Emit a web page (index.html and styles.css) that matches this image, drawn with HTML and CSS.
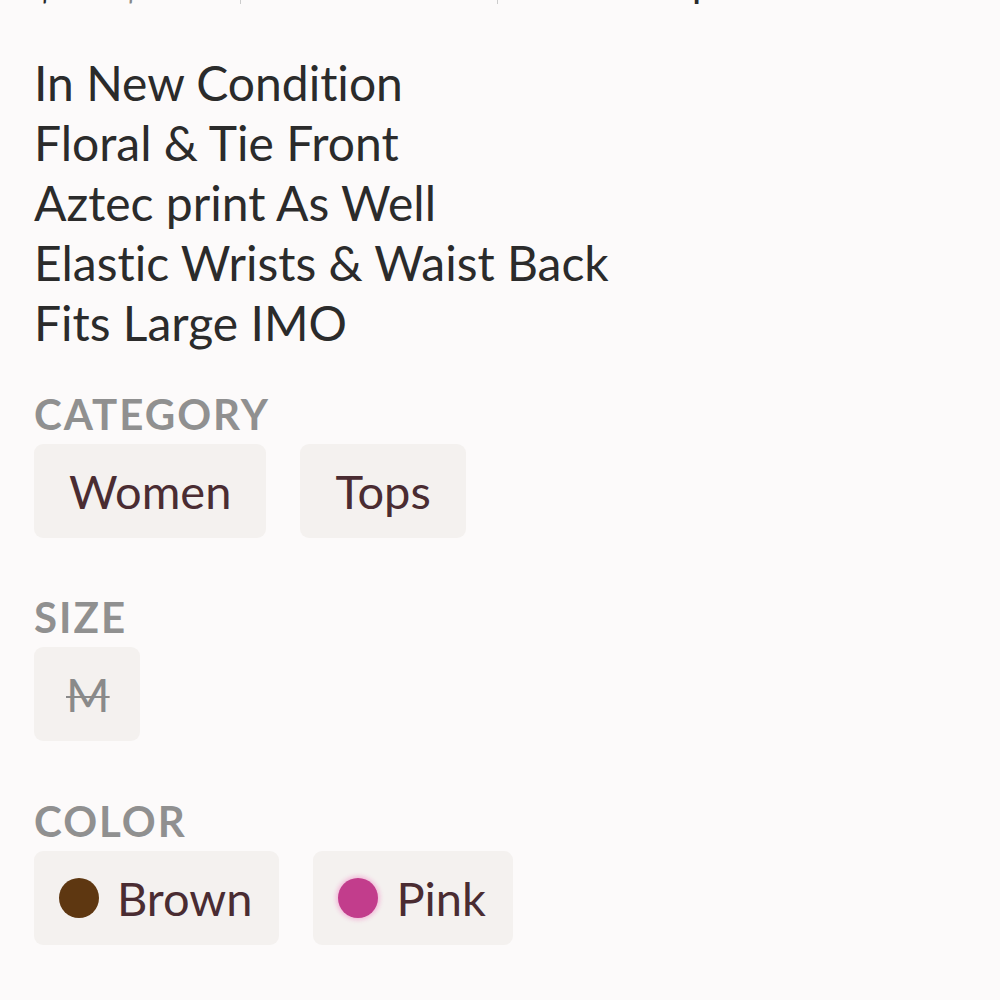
FILE: index.html
```html
<!DOCTYPE html>
<html>
<head>
<meta charset="utf-8">
<link rel="stylesheet" href="styles.css">
</head>
<body>
<div class="page">
  <div class="meta">
    <span class="price">$25</span><span class="was">$58</span><span class="sep"></span><span class="meta-item">Size: M</span><span class="sep"></span><span class="meta-item">Free People</span>
  </div>
  <div class="desc">
    <div>In New Condition</div>
    <div>Floral &amp; Tie Front</div>
    <div>Aztec print As Well</div>
    <div>Elastic Wrists &amp; Waist Back</div>
    <div>Fits Large IMO</div>
  </div>
  <section class="group">
    <h3 class="label">CATEGORY</h3>
    <div class="chips">
      <span class="chip">Women</span>
      <span class="chip">Tops</span>
    </div>
  </section>
  <section class="group">
    <h3 class="label">SIZE</h3>
    <div class="chips">
      <span class="chip chip-size"><s>M</s></span>
    </div>
  </section>
  <section class="group">
    <h3 class="label">COLOR</h3>
    <div class="chips">
      <span class="chip chip-color"><span class="dot dot-brown"></span>Brown</span>
      <span class="chip chip-color"><span class="dot dot-pink"></span>Pink</span>
    </div>
  </section>
</div>
</body>
</html>
```
FILE: styles.css
```css
html, body {
  margin: 0;
  padding: 0;
  background: #fcfafa;
}
body {
  font-family: Lato, "Liberation Sans", sans-serif;
  font-variant-ligatures: none;
  color: #2a2a2a;
  overflow: hidden;
  height: 1000px;
}
.page {
  padding-left: 34px;
}
.meta {
  display: flex;
  align-items: flex-end;
  height: 4px;
  overflow: hidden;
  font-size: 40px;
  line-height: 40px;
  color: #2a2a2a;
}
.meta > span {
  display: block;
  height: 40px;
  flex: none;
}
.meta .price { width: 86px; }
.meta .was { width: 120px; color: #888; }
.meta .sep {
  width: 1px;
  margin-right: 40px;
  background: #ccc;
}
.meta .meta-item { width: 216px; }
.desc {
  margin-top: 49px;
  font-size: 48px;
  line-height: 60px;
  color: #2b2b2b;
}
.group {
  margin: 0;
}
.label {
  margin: 0;
  font-size: 42px;
  font-weight: 700;
  color: #909090;
  line-height: 50px;
  letter-spacing: 2px;
}
.group:first-of-type .label {
  margin-top: 36px;
}
.group + .group .label {
  margin-top: 54px;
}
.group:last-of-type .label {
  margin-top: 55px;
}
.chips {
  display: flex;
  gap: 34px;
  margin-top: 5px;
}
.chip {
  display: flex;
  align-items: center;
  height: 94px;
  padding: 0 35px;
  border-radius: 9px;
  background: #f4f1ef;
  color: #4a2c32;
  font-size: 47px;
}
.chip-size {
  color: #8a8a8a;
  padding: 0 30px 0 32px;
}
.chip-size s {
  text-decoration-thickness: 2px;
}
.chip-color {
  padding: 0 27px 0 25px;
}
.dot {
  width: 40px;
  height: 40px;
  border-radius: 50%;
  margin-right: 18px;
  flex: none;
}
.dot-brown {
  background: #5e3711;
}
.dot-pink {
  background: #c23d8c;
  box-shadow: 0 0 4px 2px rgba(240, 120, 190, 0.45);
}
```
